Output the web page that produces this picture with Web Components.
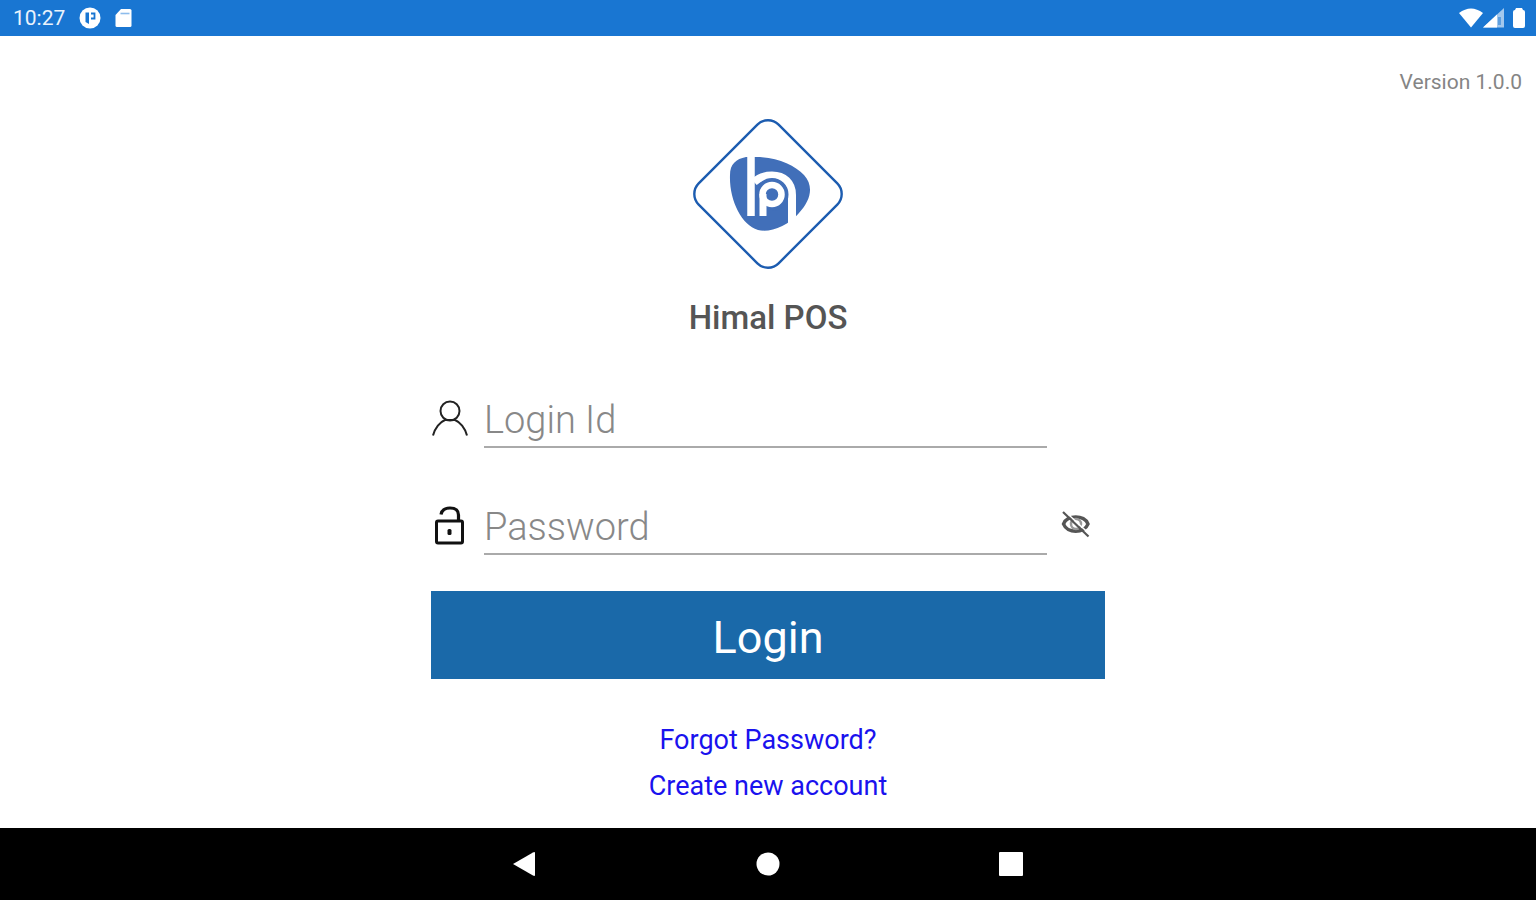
<!DOCTYPE html>
<html lang="en">
<head>
<meta charset="utf-8">
<meta name="viewport" content="width=device-width, initial-scale=1">
<title>Himal POS</title>
<style>
  body { margin: 0; background: #fff; font-family: Roboto, "Liberation Sans", sans-serif; }
</style>
</head>
<body>
<pos-screen>
  <status-bar slot="status">10:27</status-bar>
  <span slot="version">Version 1.0.0</span>
  <pos-brand>Himal POS</pos-brand>
  <login-form></login-form>
  <nav-bar slot="nav"></nav-bar>
</pos-screen>

<script>
(function () {
  class PosScreen extends HTMLElement {
    constructor() {
      super();
      this.attachShadow({ mode: 'open' });
    }

    connectedCallback() {
      this.shadowRoot.innerHTML = `
        <style>
          :host { display: flex; flex-direction: column; min-height: 100vh; }
          .version { padding: 34px 14px 0; text-align: right; font-size: 21px; line-height: 24px; color: #858585; }
          main { flex: 1; display: flex; flex-direction: column; align-items: center; padding: 24px 16px 16px; }
        </style>
        <slot name="status"></slot>
        <div class="version"><slot name="version"></slot></div>
        <main><slot></slot></main>
        <slot name="nav"></slot>
      `;
    }
  }

  class StatusBar extends HTMLElement {
    constructor() {
      super();
      this.attachShadow({ mode: 'open' });
    }

    connectedCallback() {
      this.shadowRoot.innerHTML = `
        <style>
          :host { display: flex; align-items: center; justify-content: space-between; height: 36px; padding: 0 10px 0 13px; background: #1976d2; color: #eaf3fc; font-size: 21px; }
          div { display: flex; align-items: center; }
          .left { gap: 14px; }
          svg { display: block; fill: #fff; }
        </style>
        <div class="left">
          <span><slot></slot></span>
          <svg width="22" height="22" viewBox="0 0 22 22"><circle cx="11" cy="11" r="10.500"/><path d="M6.500 5.500H10V17L6.500 15z" fill="#1976d2"/><path d="M12 6.500H15.500V11.500H12" fill="none" stroke="#1976d2" stroke-width="1.800"/></svg>
          <svg width="17" height="20" viewBox="0 0 17 20"><path d="M6 1h9q1.500 0 1.500 1.500v15q0 1.500-1.500 1.500H2Q.5 19 .5 17.500V7z"/><path d="M5.500 5.500h9" stroke="#8dbcec" stroke-width="1.600"/></svg>
        </div>
        <div class="right">
          <svg width="24" height="20" viewBox="0 0 24 20"><path d="M0 5Q12-4 24 5L12 19.500z"/></svg>
          <svg width="22" height="20" viewBox="0 0 22 20"><path d="M0 19.500L21 0v19.500z" opacity=".6"/><path d="M0 19.500L14 6.500v13z"/><path d="M15 9h3v8h-3z" fill="#1976d2" opacity=".5"/></svg>
          <svg width="21" height="22" viewBox="0 0 21 22"><path d="M11 1h6l1 2q2 0 2 2v14q0 2-2 2h-8q-2 0-2-2V5q0-2 2-2z"/></svg>
        </div>
      `;
    }
  }

  class PosBrand extends HTMLElement {
    constructor() {
      super();
      this.attachShadow({ mode: 'open' });
    }

    connectedCallback() {
      this.shadowRoot.innerHTML = `
        <style>
          :host { display: flex; flex-direction: column; align-items: center; gap: 28px; }
          svg { display: block; }
          h1 { margin: 0; font-size: 33px; line-height: 40px; font-weight: 500; color: #555; }
        </style>
        <svg width="152" height="152" viewBox="0 0 152 152" fill="none">
          <rect x="19.500" y="19.500" width="113" height="113" rx="15" transform="rotate(45 76 76)" stroke="#1c5cb0" stroke-width="2.400"/>
          <path d="M64 39C84 39 103 47 112 57C122 68 119 82 107 95C96 108 78 115 66 112C49 107 37 81 38 57C38 46 44 41 54 39Z" fill="#416fb9"/>
          <path d="M59 37V98" stroke="#fff" stroke-width="7.500"/>
          <path d="M62 64C68 58.500 74 57.500 80 57.500C92 57.500 100 65 100 77V105" stroke="#fff" stroke-width="8"/>
          <path d="M65.500 98V76.500A14.500 14.500 0 1 1 80 91" stroke="#416fb9" stroke-width="4"/>
          <circle cx="80" cy="76.500" r="9.500" stroke="#fff" stroke-width="6.500"/>
          <path d="M71 76V98" stroke="#fff" stroke-width="7"/>
        </svg>
        <h1><slot></slot></h1>
      `;
    }
  }

  class FormField extends HTMLElement {
    constructor() {
      super();
      this.attachShadow({ mode: 'open' });
    }

    connectedCallback() {
      const name = this.getAttribute('label');
      const type = this.getAttribute('type') || 'text';
      this.shadowRoot.innerHTML = `
        <style>
          :host { display: flex; align-items: center; height: 60px; }
          label { flex: none; width: 53px; }
          input {
            flex: 1; min-width: 0; box-sizing: border-box; height: 60px; padding: 6px 0 0;
            border: 0; border-bottom: 2px solid #aaa; border-radius: 0; outline: none;
            background: none; color: #333; font: 300 38px/46px Roboto, sans-serif;
          }
          input::placeholder { color: #888; opacity: 1; }
          input:focus { border-color: #1a69a9; }
          .end { flex: none; width: 58px; }
        </style>
        <label for="field" aria-label="${name}"><slot name="icon"></slot></label>
        <input id="field" type="${type}" placeholder="${name}">
        <div class="end"><slot name="action"></slot></div>
      `;
    }

    togglePassword() {
      const input = this.shadowRoot.querySelector('input');
      input.type = input.type === 'password' ? 'text' : 'password';
    }
  }

  class TextLink extends HTMLElement {
    constructor() {
      super();
      this.attachShadow({ mode: 'open' });
    }

    connectedCallback() {
      this.shadowRoot.innerHTML = `
        <style>
          :host { display: block; }
          a { color: #1a12ee; text-decoration: none; font-size: 27px; line-height: 46px; }
        </style>
        <a href="#"><slot></slot></a>
      `;
    }
  }

  class LoginForm extends HTMLElement {
    constructor() {
      super();
      this.attachShadow({ mode: 'open' });
    }

    connectedCallback() {
      this.shadowRoot.innerHTML = `
        <style>
          :host { display: block; width: 100%; max-width: 674px; margin-top: 50px; }
          form { display: flex; flex-direction: column; }
          form-field + form-field { margin-top: 47px; }
          svg { display: block; fill: none; }
          .eye { display: block; margin-left: 14px; padding: 0; border: 0; background: none; cursor: pointer; }
          .submit {
            height: 88px; margin-top: 36px; border: 0; background: #1a69a9; color: #fff;
            font: 400 45px/54px Roboto, sans-serif; padding: 6px 0 0; cursor: pointer;
          }
          .links { display: flex; flex-direction: column; align-items: center; margin-top: 38px; }
        </style>
        <form>
          <form-field label="Login Id">
            <svg slot="icon" width="38" height="38" viewBox="0 0 38 38" stroke="#222" stroke-width="2"><circle cx="19" cy="12" r="9.500"/><path d="M2 36.500C4 29 9 23 14 21H24C29 23 34 29 36 36.500"/></svg>
          </form-field>
          <form-field label="Password" type="password">
            <svg slot="icon" width="38" height="40" viewBox="0 0 38 40" stroke="#111" stroke-width="3"><rect x="5.500" y="16" width="26" height="22" rx="1.500"/><path d="M10 9.500C11 4.500 14 3 19 3C25 3 27.500 6 27.500 10V16" stroke-width="3.200"/><rect x="16.500" y="24" width="4" height="6" rx="1.500" fill="#111" stroke="none"/></svg>
            <button slot="action" class="eye" type="button" aria-label="Show password">
              <svg width="30" height="30" viewBox="0 0 30 30"><path d="M2.500 14C6 4.500 23.500 4.500 27 14C23.500 23.500 6 23.500 2.500 14Z" stroke="#555" stroke-width="3.500"/><circle cx="15" cy="14" r="5" stroke="#999" stroke-width="2.500"/><path d="M3.500 1L29 24.500" stroke="#fff" stroke-width="1.600"/><path d="M2 2L27.500 26.500" stroke="#555" stroke-width="2.200"/></svg>
            </button>
          </form-field>
          <button class="submit" type="submit">Login</button>
        </form>
        <div class="links">
          <text-link>Forgot Password?</text-link>
          <text-link>Create new account</text-link>
        </div>
      `;
      this.shadowRoot.querySelector('form').addEventListener('submit', (event) => event.preventDefault());
      this.shadowRoot.querySelector('.eye').addEventListener('click', (event) => {
        event.currentTarget.closest('form-field').togglePassword();
      });
    }
  }

  class NavBar extends HTMLElement {
    constructor() {
      super();
      this.attachShadow({ mode: 'open' });
    }

    connectedCallback() {
      this.shadowRoot.innerHTML = `
        <style>
          :host { display: block; background: #000; }
          nav { display: flex; align-items: center; justify-content: center; gap: 203px; height: 72px; }
          button { width: 40px; height: 40px; padding: 0; border: 0; background: none; cursor: pointer; }
          svg { display: block; margin: auto; fill: #fff; }
        </style>
        <nav>
          <button aria-label="Back"><svg width="24" height="26" viewBox="0 0 24 26"><path d="M0 13L20 1.500Q22 .5 22 2V24Q22 25.500 20 24.500z"/></svg></button>
          <button aria-label="Home"><svg width="24" height="24" viewBox="0 0 24 24"><circle cx="12" cy="12" r="11.500"/></svg></button>
          <button aria-label="Overview"><svg width="24" height="24" viewBox="0 0 24 24"><rect width="24" height="24" rx="1"/></svg></button>
        </nav>
      `;
    }
  }

  customElements.define('pos-screen', PosScreen);
  customElements.define('status-bar', StatusBar);
  customElements.define('pos-brand', PosBrand);
  customElements.define('form-field', FormField);
  customElements.define('text-link', TextLink);
  customElements.define('login-form', LoginForm);
  customElements.define('nav-bar', NavBar);
})();
</script>
</body>
</html>
